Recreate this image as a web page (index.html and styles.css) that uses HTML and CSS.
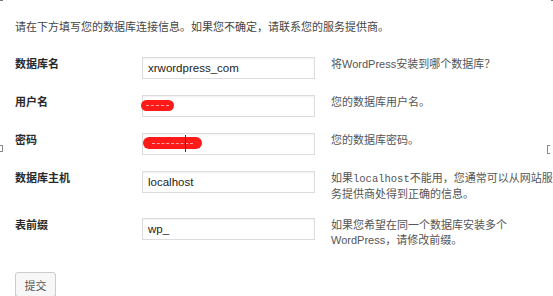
FILE: index.html
```html
<!DOCTYPE html>
<html lang="zh-CN">
<head>
<meta charset="utf-8">
<title>数据库配置</title>
<link rel="stylesheet" href="styles.css">
</head>
<body>
<span class="mark mark-tl"></span>
<span class="mark mark-tr"></span>
<span class="mark mark-sq"></span>
<span class="mark mark-br"></span>
<div class="page">
  <p class="intro">请在下方填写您的数据库连接信息。如果您不确定，请联系您的服务提供商。</p>
  <div class="form">
    <div class="label">数据库名</div>
    <div class="field"><div class="input">xrwordpress_com</div></div>
    <div class="desc">将WordPress安装到哪个数据库？</div>

    <div class="label">用户名</div>
    <div class="field"><div class="input"></div><span class="redact redact-user"><span class="dash"></span></span></div>
    <div class="desc">您的数据库用户名。</div>

    <div class="label">密码</div>
    <div class="field"><div class="input"></div><span class="redact redact-pass"><span class="dash"></span></span><span class="cursor"></span></div>
    <div class="desc">您的数据库密码。</div>

    <div class="label">数据库主机</div>
    <div class="field"><div class="input">localhost</div></div>
    <div class="desc">如果<code>localhost</code>不能用，您通常可以从网站服务提供商处得到正确的信息。</div>

    <div class="label">表前缀</div>
    <div class="field"><div class="input">wp_</div></div>
    <div class="desc">如果您希望在同一个数据库安装多个WordPress，请修改前缀。</div>
  </div>
  <button class="submit" type="button">提交</button>
</div>
</body>
</html>
```
FILE: styles.css
```css
html, body {
  margin: 0;
  padding: 0;
  overflow: hidden;
  background: #fff;
}
body {
  font-family: "Liberation Sans", "Noto Sans CJK SC", sans-serif;
  font-size: 11px;
  color: #444;
  width: 553px;
  height: 296px;
  position: relative;
}
.page {
  padding: 20px 0 0 15px;
  width: 570px;
}
.intro {
  margin: 0;
  line-height: 15px;
  color: #444;
  white-space: nowrap;
}
.form {
  margin-top: 22px;
  display: grid;
  grid-template-columns: 127px 189px 230px;
  row-gap: 16px;
  align-items: start;
}
.label {
  font-weight: bold;
  color: #2a2a2a;
  line-height: 15px;
}
.field {
  position: relative;
}
.input {
  box-sizing: border-box;
  width: 173px;
  height: 22px;
  border: 1px solid #dcdcdc;
  box-shadow: inset 0 1px 2px rgba(0,0,0,0.06);
  background: #fff;
  padding: 0 5px;
  font-size: 11.5px;
  line-height: 20px;
  color: #222;
}
.desc {
  line-height: 15px;
  color: #555;
}
.desc code {
  font-family: "Liberation Mono", monospace;
  font-size: 10.5px;
  line-height: 15px;
}
.redact {
  position: absolute;
  background: #ff1a1a;
  border-radius: 6px;
  display: flex;
  align-items: center;
  justify-content: center;
}
.redact-user {
  left: -1px;
  top: 5px;
  width: 33px;
  height: 11px;
}
.redact-pass {
  left: 1px;
  top: 4px;
  width: 59px;
  height: 12px;
}
.dash {
  display: block;
  width: 70%;
  height: 0;
  border-top: 1px dashed rgba(255, 200, 200, 0.8);
}
.cursor {
  position: absolute;
  left: 43px;
  top: 2px;
  width: 1px;
  height: 17px;
  background: #333;
}
.submit {
  margin-top: 24px;
  width: 41px;
  height: 25px;
  padding: 0;
  border: 1px solid #ccc;
  border-radius: 3px;
  background: #f7f7f7;
  box-shadow: 0 1px 0 #ccc;
  font-family: "Noto Sans CJK SC", sans-serif;
  font-size: 11px;
  color: #555;
}
.mark {
  position: absolute;
  display: block;
}
.mark-tl {
  left: 0;
  top: 0;
  width: 3px;
  height: 1px;
  background: #777;
}
.mark-tr {
  left: 551px;
  top: 0;
  width: 2px;
  height: 1px;
  background: #777;
}
.mark-sq {
  left: 0;
  top: 145px;
  width: 2px;
  height: 5px;
  border: 1px solid #888;
  border-left: none;
}
.mark-br {
  left: 547px;
  top: 145px;
  width: 2px;
  height: 7px;
  border: 1px solid #888;
  border-right: none;
}
```
